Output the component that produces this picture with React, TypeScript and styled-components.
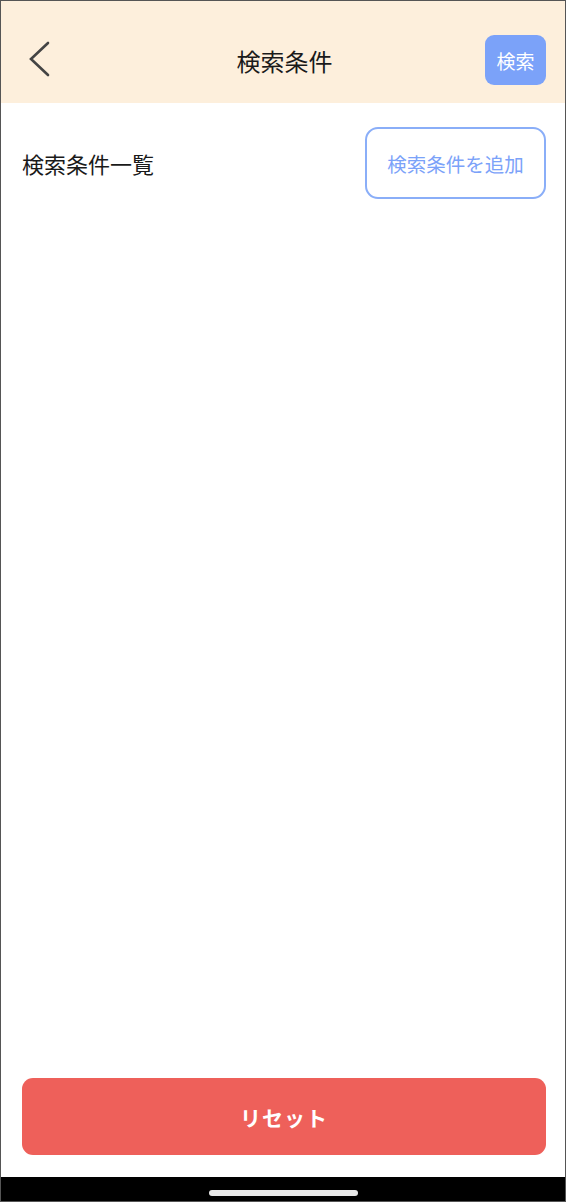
import React from 'react'
import styled, { createGlobalStyle } from 'styled-components'

const GlobalStyle = createGlobalStyle`
  html, body {
    margin: 0;
    padding: 0;
    background: #fff;
  }
  body {
    font-family: "Noto Sans CJK JP", "Noto Sans", sans-serif;
  }
  * {
    box-sizing: border-box;
  }
`

const Screen = styled.div`
  width: 566px;
  height: 1202px;
  border: 1px solid #555;
  display: flex;
  flex-direction: column;
  background: #fff;
  overflow: hidden;
`

// status bar space sits above the nav row
const Header = styled.header`
  height: 102px;
  flex: 0 0 102px;
  background: #fdefdc;
  display: grid;
  grid-template-columns: 80px 1fr 80px;
  align-items: center;
  padding: 16px 19px 0 22px;
`

const BackButton = styled.button`
  border: none;
  background: none;
  padding: 0;
  width: 40px;
  height: 40px;
  display: flex;
  align-items: center;
  cursor: pointer;
`

const Title = styled.h1`
  margin: 0;
  text-align: center;
  font-size: 24px;
  font-weight: 400;
  color: #1a1a1a;
`

const SearchButton = styled.button`
  justify-self: end;
  width: 61px;
  height: 50px;
  border: none;
  border-radius: 9px;
  background: #7ba2f9;
  color: #fff;
  font-family: inherit;
  font-size: 19px;
  padding: 0;
  cursor: pointer;
`

const Content = styled.main`
  flex: 1;
  padding: 24px 19px 0 21px;
`

const ListHeader = styled.div`
  display: flex;
  align-items: center;
  justify-content: space-between;
`

const SectionTitle = styled.h2`
  margin: 0;
  font-size: 22px;
  font-weight: 400;
  color: #1a1a1a;
`

const AddButton = styled.button`
  width: 181px;
  height: 72px;
  border: 2px solid #8aaef8;
  border-radius: 13px;
  background: #fff;
  color: #7ba2f9;
  font-family: inherit;
  font-size: 19.5px;
  padding: 0;
  cursor: pointer;
`

const Footer = styled.div`
  padding: 0 19px 22px 21px;
`

const ResetButton = styled.button`
  width: 100%;
  height: 77px;
  border: none;
  border-radius: 11px;
  background: #ee605a;
  color: #fff;
  font-family: inherit;
  font-size: 21px;
  font-weight: 700;
  letter-spacing: 1px;
  cursor: pointer;
`

const HomeBar = styled.div`
  flex: 0 0 24px;
  background: #000;
  display: flex;
  justify-content: center;
  align-items: flex-start;
  padding-top: 13px;
`

const HomeIndicator = styled.div`
  width: 149px;
  height: 6px;
  border-radius: 3px;
  background: #e8e8e8;
`

export default function App() {
  return (
    <>
      <GlobalStyle />
      <Screen>
        <Header>
          <BackButton aria-label="戻る">
            <svg width="30" height="40" viewBox="0 0 30 40">
              <polyline
                points="25,3 8,19 25,35"
                fill="none"
                stroke="#444"
                strokeWidth="2.6"
                strokeLinecap="round"
                strokeLinejoin="miter"
              />
            </svg>
          </BackButton>
          <Title>検索条件</Title>
          <SearchButton>検索</SearchButton>
        </Header>
        <Content>
          <ListHeader>
            <SectionTitle>検索条件一覧</SectionTitle>
            <AddButton>検索条件を追加</AddButton>
          </ListHeader>
        </Content>
        <Footer>
          <ResetButton>リセット</ResetButton>
        </Footer>
        <HomeBar>
          <HomeIndicator />
        </HomeBar>
      </Screen>
    </>
  )
}
